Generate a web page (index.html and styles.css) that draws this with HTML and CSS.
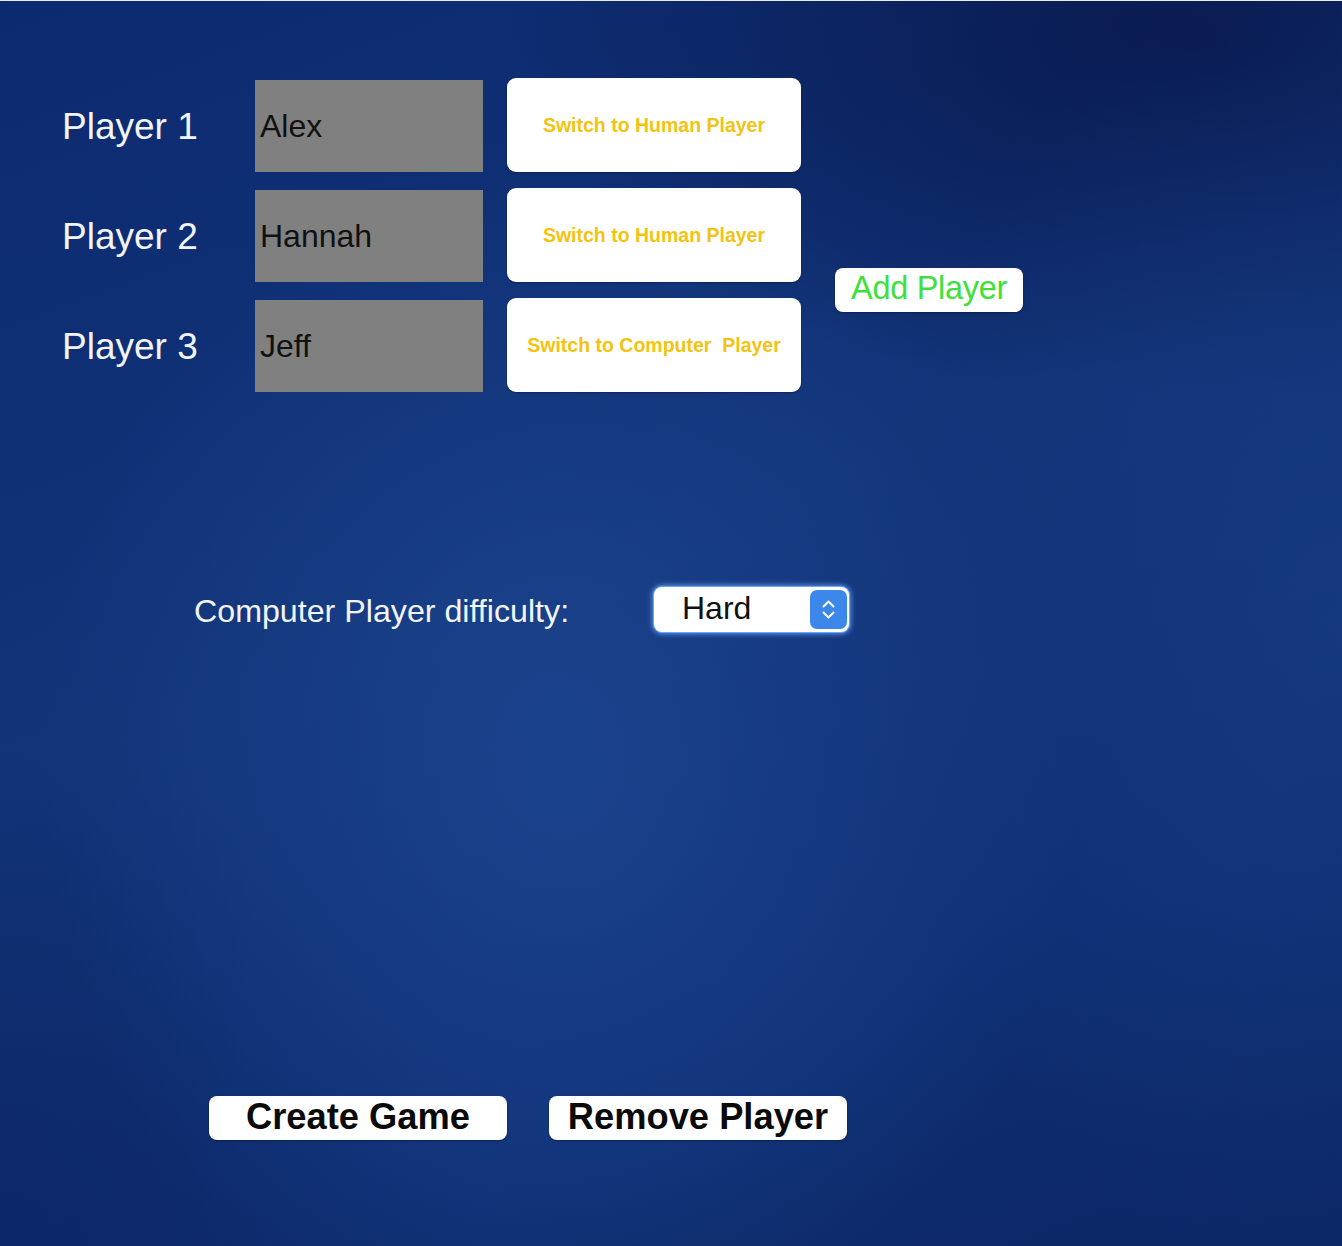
FILE: index.html
```html
<!DOCTYPE html>
<html lang="en">
<head>
<meta charset="utf-8">
<title>Game Setup</title>
<link rel="stylesheet" href="styles.css">
</head>
<body>
<div class="page">
  <section class="players-area">
    <div class="players">
      <div class="player-row">
        <div class="player-label">Player 1</div>
        <div class="name-box">Alex</div>
        <button class="toggle-btn">Switch to Human Player</button>
      </div>
      <div class="player-row">
        <div class="player-label">Player 2</div>
        <div class="name-box">Hannah</div>
        <button class="toggle-btn">Switch to Human Player</button>
      </div>
      <div class="player-row">
        <div class="player-label">Player 3</div>
        <div class="name-box">Jeff</div>
        <button class="toggle-btn">Switch to Computer&nbsp; Player</button>
      </div>
    </div>
    <button class="add-btn">Add Player</button>
  </section>

  <section class="difficulty-row">
    <div class="difficulty-label">Computer Player difficulty:</div>
    <div class="select">
      <span class="select-value">Hard</span>
      <span class="select-stepper">
        <svg width="37" height="39" viewBox="0 0 37 39">
          <path d="M13.5 16.5 L18.5 11.5 L23.5 16.5" fill="none" stroke="#fff" stroke-width="2" stroke-linecap="round" stroke-linejoin="round"/>
          <path d="M13.5 22.5 L18.5 27.5 L23.5 22.5" fill="none" stroke="#fff" stroke-width="2" stroke-linecap="round" stroke-linejoin="round"/>
        </svg>
      </span>
    </div>
  </section>

  <section class="actions">
    <button class="action-btn">Create Game</button>
    <button class="action-btn">Remove Player</button>
  </section>
</div>
</body>
</html>
```
FILE: styles.css
```css
html, body {
  margin: 0;
  padding: 0;
}

body {
  width: 1342px;
  height: 1246px;
  overflow: hidden;
  font-family: "Liberation Sans", Arial, sans-serif;
  border-top: 1px solid #e8ecf5;
  box-sizing: border-box;
  background:
    radial-gradient(ellipse 520px 620px at 560px 760px, rgba(30, 72, 148, 0.75), rgba(30, 72, 148, 0) 100%),
    radial-gradient(ellipse 420px 700px at 1330px 620px, rgba(24, 62, 135, 0.55), rgba(24, 62, 135, 0) 100%),
    radial-gradient(ellipse 700px 360px at 1200px 40px, rgba(8, 22, 72, 0.85), rgba(8, 22, 72, 0) 100%),
    radial-gradient(ellipse 500px 500px at 0px 1246px, rgba(10, 34, 96, 0.6), rgba(10, 34, 96, 0) 100%),
    linear-gradient(160deg, #0c2a70 0%, #123478 45%, #0f2f74 75%, #0b2663 100%);
}

.page {
  padding: 77px 0 0 62px;
}

.players-area {
  display: flex;
  align-items: flex-start;
}

.players {
  display: flex;
  flex-direction: column;
  gap: 16px;
}

.player-row {
  display: flex;
  align-items: center;
  height: 94px;
}

.player-label {
  width: 193px;
  color: #f2f4f8;
  font-size: 37px;
  line-height: 1;
  padding-top: 3px;
}

.name-box {
  width: 228px;
  height: 92px;
  box-sizing: border-box;
  background: #808080;
  color: #111;
  font-size: 32px;
  display: flex;
  align-items: center;
  padding-left: 5px;
  padding-top: 1px;
  margin-top: 1px;
}

.toggle-btn {
  margin-left: 24px;
  width: 294px;
  height: 94px;
  border: none;
  border-radius: 9px;
  background: #ffffff;
  color: #f4c30f;
  font-family: "Liberation Sans", Arial, sans-serif;
  font-weight: bold;
  font-size: 19.5px;
  padding: 0;
  box-shadow: 0 1px 2px rgba(0, 0, 20, 0.35);
}

.add-btn {
  margin-left: 34px;
  margin-top: 190px;
  width: 188px;
  height: 44px;
  border: none;
  border-radius: 8px;
  background: #ffffff;
  color: #3fe03a;
  font-family: "Liberation Sans", Arial, sans-serif;
  font-size: 32.5px;
  letter-spacing: -0.3px;
  padding: 0 0 3px;
  box-shadow: 0 1px 2px rgba(0, 0, 20, 0.35);
}

.difficulty-row {
  display: flex;
  align-items: center;
  margin-top: 195px;
  padding-left: 132px;
}

.difficulty-label {
  width: 460px;
  color: #f2f4f8;
  font-size: 32.2px;
  padding-top: 4px;
}

.select {
  width: 195px;
  height: 45px;
  box-sizing: border-box;
  background: #ffffff;
  border-radius: 8px;
  box-shadow: 0 0 0 1px #6aa6ff, 0 0 5px 2px rgba(110, 170, 255, 0.8);
  display: flex;
  align-items: center;
  justify-content: space-between;
  padding: 0 2px 0 28px;
}

.select-value {
  color: #111;
  font-size: 32px;
  padding-bottom: 3px;
}

.select-stepper {
  width: 37px;
  height: 39px;
  border-radius: 7px;
  background: #3c87ea;
  display: flex;
}

.actions {
  display: flex;
  gap: 42px;
  margin-top: 464px;
  padding-left: 147px;
}

.action-btn {
  width: 298px;
  height: 44px;
  border: none;
  border-radius: 8px;
  background: #ffffff;
  color: #0a0a0a;
  font-family: "Liberation Sans", Arial, sans-serif;
  font-weight: bold;
  font-size: 36.3px;
  padding: 0 0 2px;
  box-shadow: 0 1px 2px rgba(0, 0, 20, 0.35);
}
```
